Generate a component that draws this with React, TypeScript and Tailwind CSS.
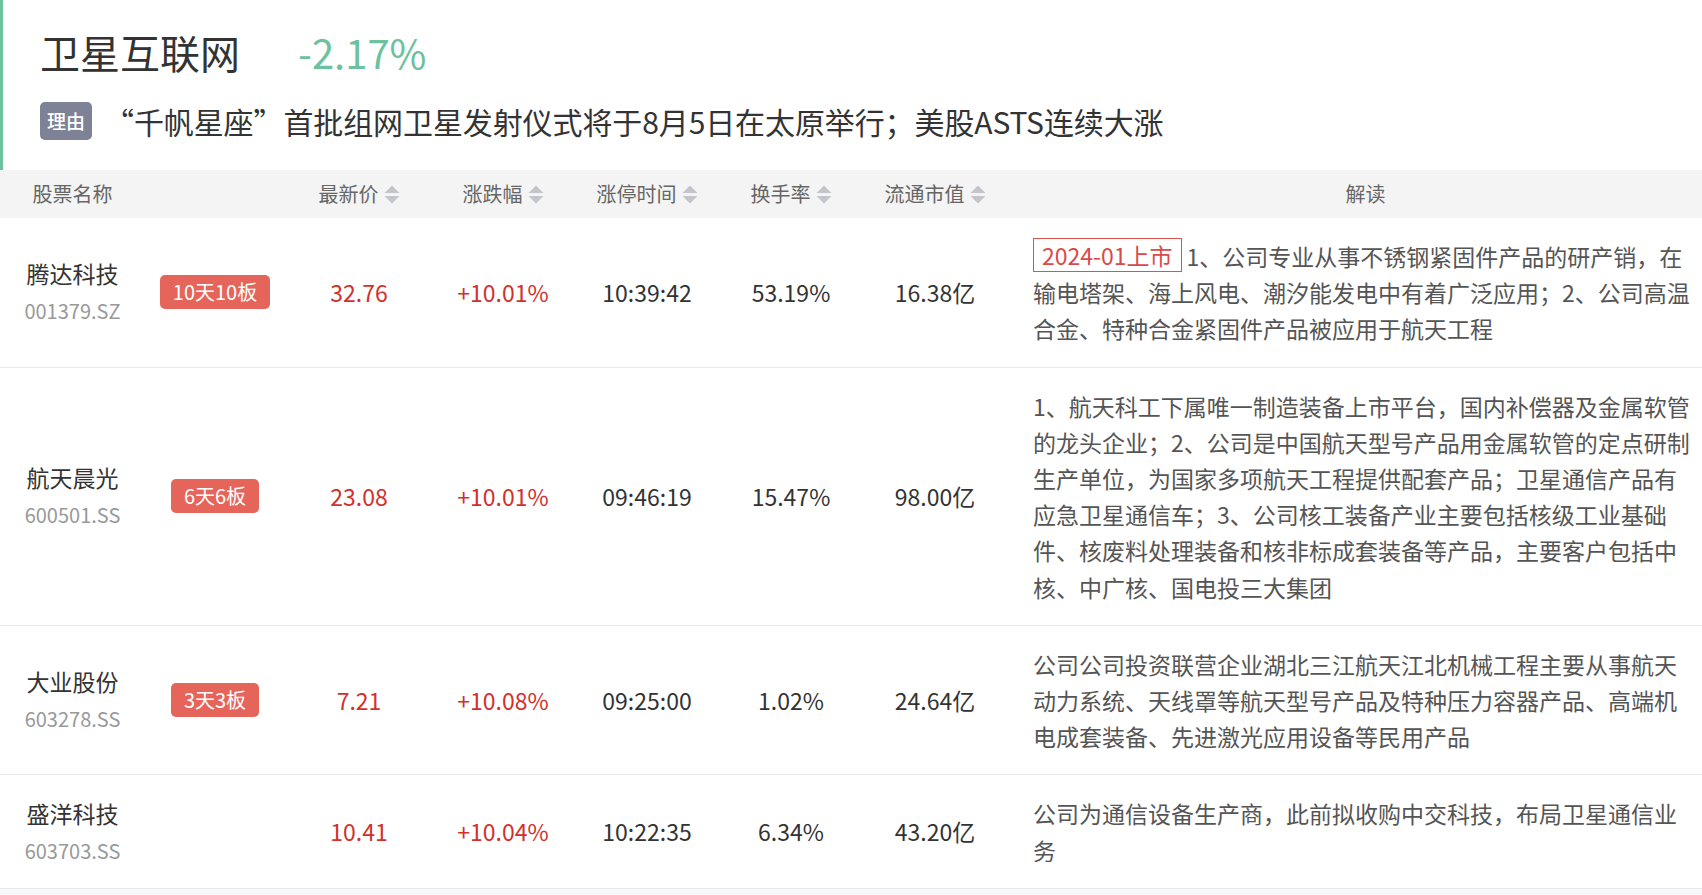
type Row = {
  name: string;
  code: string;
  boards?: string;
  price: string;
  change: string;
  time: string;
  turnover: string;
  cap: string;
  listed?: string;
  desc: string;
};

const rows: Row[] = [
  {
    name: "腾达科技",
    code: "001379.SZ",
    boards: "10天10板",
    price: "32.76",
    change: "+10.01%",
    time: "10:39:42",
    turnover: "53.19%",
    cap: "16.38亿",
    listed: "2024-01上市",
    desc: "1、公司专业从事不锈钢紧固件产品的研产销，在输电塔架、海上风电、潮汐能发电中有着广泛应用；2、公司高温合金、特种合金紧固件产品被应用于航天工程",
  },
  {
    name: "航天晨光",
    code: "600501.SS",
    boards: "6天6板",
    price: "23.08",
    change: "+10.01%",
    time: "09:46:19",
    turnover: "15.47%",
    cap: "98.00亿",
    desc: "1、航天科工下属唯一制造装备上市平台，国内补偿器及金属软管的龙头企业；2、公司是中国航天型号产品用金属软管的定点研制生产单位，为国家多项航天工程提供配套产品；卫星通信产品有应急卫星通信车；3、公司核工装备产业主要包括核级工业基础件、核废料处理装备和核非标成套装备等产品，主要客户包括中核、中广核、国电投三大集团",
  },
  {
    name: "大业股份",
    code: "603278.SS",
    boards: "3天3板",
    price: "7.21",
    change: "+10.08%",
    time: "09:25:00",
    turnover: "1.02%",
    cap: "24.64亿",
    desc: "公司公司投资联营企业湖北三江航天江北机械工程主要从事航天动力系统、天线罩等航天型号产品及特种压力容器产品、高端机电成套装备、先进激光应用设备等民用产品",
  },
  {
    name: "盛洋科技",
    code: "603703.SS",
    price: "10.41",
    change: "+10.04%",
    time: "10:22:35",
    turnover: "6.34%",
    cap: "43.20亿",
    desc: "公司为通信设备生产商，此前拟收购中交科技，布局卫星通信业务",
  },
];

const cols = "grid grid-cols-[145px_140px_148px_140px_148px_140px_148px_713px]";

function SortIcon() {
  return (
    <svg width="16" height="19" viewBox="0 0 16 19" className="ml-[5px] shrink-0">
      <path d="M8 0.5 L15.5 8 L0.5 8 Z" fill="#c3c5cb" />
      <path d="M8 18.5 L15.5 11 L0.5 11 Z" fill="#c3c5cb" />
    </svg>
  );
}

function HeadCell({ label, sort }: { label: string; sort?: boolean }) {
  return (
    <div className="flex items-center justify-center">
      <span>{label}</span>
      {sort && <SortIcon />}
    </div>
  );
}

export default function App() {
  return (
    <div className="h-[895px] w-[1702px] overflow-hidden bg-white font-['Noto_Sans_CJK_SC','Noto_Sans',sans-serif]">
      <div className="w-[1722px]">
        <div className="h-[170px] border-l-[3px] border-[#6cc19f] pl-[37px] pt-[24px]">
          <div className="flex h-[56px] items-center">
            <h1 className="text-[40px] font-normal leading-[56px] text-[#333]">卫星互联网</h1>
            <span className="ml-[58px] text-[40px] leading-[56px] text-[#6cc19f]">-2.17%</span>
          </div>
          <div className="mt-[22px] flex items-center">
            <span className="flex h-[38px] w-[52px] items-center justify-center rounded-[5px] bg-[#7e8296] text-[19px] font-medium text-white">理由</span>
            <p className="ml-[12px] text-[30px] tracking-[-0.1px] leading-[38px] text-[#333]">“千帆星座”首批组网卫星发射仪式将于8月5日在太原举行；美股ASTS连续大涨</p>
          </div>
        </div>

        <div className={`${cols} h-[48px] bg-[#f4f4f4] text-[20px] text-[#666]`}>
          <HeadCell label="股票名称" />
          <div />
          <HeadCell label="最新价" sort />
          <HeadCell label="涨跌幅" sort />
          <HeadCell label="涨停时间" sort />
          <HeadCell label="换手率" sort />
          <HeadCell label="流通市值" sort />
          <HeadCell label="解读" />
        </div>

        {rows.map((r) => (
          <div key={r.code} className={`${cols} border-b border-[#e9e9e9] text-[23px]`}>
            <div className="flex flex-col items-center justify-center">
              <span className="leading-[38px] text-[#333]">{r.name}</span>
              <span className="text-[20px] leading-[38px] text-[#999]">{r.code}</span>
            </div>
            <div className="flex items-center justify-center">
              {r.boards && (
                <span className="flex h-[34px] items-center rounded-[5px] bg-[#e5655a] px-[13px] text-[20px] text-white">{r.boards}</span>
              )}
            </div>
            <div className="flex items-center justify-center text-[#d2302c]">{r.price}</div>
            <div className="flex items-center justify-center text-[#d2302c]">{r.change}</div>
            <div className="flex items-center justify-center text-[#333]">{r.time}</div>
            <div className="flex items-center justify-center text-[#333]">{r.turnover}</div>
            <div className="flex items-center justify-center text-[#333]">{r.cap}</div>
            <div className="px-[24px] py-[20px] leading-[36.2px] text-[#555]">
              {r.listed && (
                <span className="mr-[5px] inline-block border border-[#d9534f] px-[8px] align-top leading-[32px] text-[#d94a4a]">{r.listed}</span>
              )}
              {r.desc}
            </div>
          </div>
        ))}
        <div className="h-[10px] bg-[#f6f7f9]" />
      </div>
    </div>
  );
}
